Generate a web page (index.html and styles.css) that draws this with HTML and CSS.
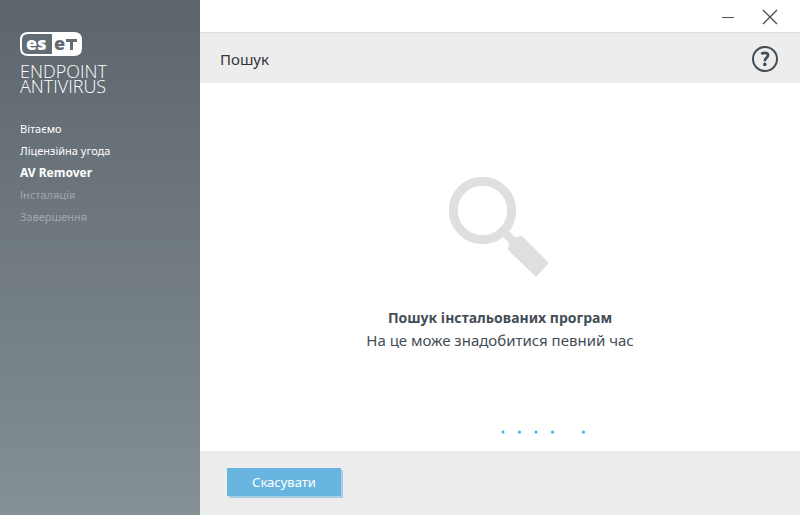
FILE: index.html
```html
<!DOCTYPE html>
<html lang="uk">
<head>
<meta charset="utf-8">
<meta name="viewport" content="width=device-width, initial-scale=1">
<title>ESET Endpoint Antivirus</title>
<link rel="stylesheet" href="styles.css">
</head>
<body>
<div class="window">
  <aside class="sidebar">
    <div class="brand">
      <svg class="brand-badge" viewBox="0 0 62 24" role="img" aria-label="eset">
        <path d="M8 0H54Q62 0 62 8V16Q62 24 54 24H8Q0 24 0 16V8Q0 0 8 0Z" fill="#fff"/>
        <path d="M8 2H32V22H8Q2 22 2 16V8Q2 2 8 2Z" fill="#626c73"/>
        <text class="badge-text" x="6" y="18" fill="#fff">es</text>
        <text class="badge-text" x="34" y="18" fill="#626c73">e</text>
        <path d="M46 7H57V10H53V18H50V10H46Z" fill="#626c73"/>
      </svg>
      <div class="brand-name">ENDPOINT<br>ANTIVIRUS</div>
    </div>
    <ol class="steps">
      <li>Вітаємо</li>
      <li>Ліцензійна угода</li>
      <li class="current" aria-current="step">AV Remover</li>
      <li class="pending">Інсталяція</li>
      <li class="pending">Завершення</li>
    </ol>
  </aside>
  <main class="main">
    <div class="titlebar">
      <button class="icon-button" type="button" aria-label="Згорнути">
        <svg width="16" height="16" viewBox="0 0 16 16"><path d="M2 8.5H14" stroke="#434d56" fill="none"/></svg>
      </button>
      <button class="icon-button" type="button" aria-label="Закрити">
        <svg width="16" height="16" viewBox="0 0 16 16"><path d="M1 1L15 15M15 1L1 15" stroke="#434d56" stroke-width="1.3" fill="none"/></svg>
      </button>
    </div>
    <header class="header">
      <h1>Пошук</h1>
      <button class="help" type="button" aria-label="Довідка">
        <svg width="26" height="26" viewBox="0 0 26 26" fill="none" stroke="#434d56">
          <circle cx="13" cy="13" r="12" stroke-width="2"/>
          <path d="M9.2 8Q10.8 6.8 12.8 6.8Q16 6.8 16 9.2Q16 10.6 14.4 11.8Q12.8 12.9 12.8 15.2" stroke-width="2.7"/>
          <circle cx="12.8" cy="18.4" r="1.8" fill="#434d56" stroke="none"/>
        </svg>
      </button>
    </header>
    <section class="content">
      <svg class="magnifier" width="102" height="100" viewBox="0 0 102 100" aria-hidden="true">
        <circle cx="33.5" cy="33.5" r="29.2" fill="none" stroke="#dfdfdf" stroke-width="9"/>
        <path d="M54 60L60 54L66 60L73 59L100 86L87 100L59 73L60 66Z" fill="#dfdfdf"/>
      </svg>
      <h2>Пошук інстальованих програм</h2>
      <p>На це може знадобитися певний час</p>
      <svg class="progress" width="86" height="4" viewBox="0 0 86 4" fill="#45a9dd" role="progressbar" aria-label="Пошук">
        <circle cx="2" cy="2" r="1.5"/><circle cx="18.5" cy="2" r="1.5"/><circle cx="35" cy="2" r="1.5"/><circle cx="51.5" cy="2" r="1.5"/><circle cx="82.5" cy="2" r="1.5"/>
      </svg>
    </section>
    <footer class="footer">
      <button class="cancel" type="button">Скасувати</button>
    </footer>
  </main>
</div>
</body>
</html>
```
FILE: styles.css
```css
* {
  box-sizing: border-box;
}

body {
  margin: 0;
  font-family: "Noto Sans", "Open Sans", sans-serif;
  color: #434d56;
  background: #fff;
}

button {
  font: inherit;
  border: 0;
  padding: 0;
  background: none;
  cursor: pointer;
}

svg {
  display: block;
}

.window {
  display: flex;
  min-height: 100vh;
}

.sidebar {
  flex: 0 0 25%;
  padding: 32px 20px;
  color: #fff;
  background: linear-gradient(#5c656c, #849095);
}

.brand-badge {
  width: 62px;
  height: 24px;
  overflow: visible;
}

.badge-text {
  font: 800 18px "Open Sans", sans-serif;
}

.brand-name {
  margin-top: 8px;
  font: 300 18px/15px "Open Sans", sans-serif;
}

.steps {
  list-style: none;
  margin: 24px 0 0;
  padding: 0;
  font-size: 11px;
  line-height: 22px;
}

.current {
  font-size: 12px;
  font-weight: 700;
}

.pending {
  color: #a3a8ab;
}

.main {
  flex: 1;
  display: flex;
  flex-direction: column;
}

.titlebar {
  display: flex;
  justify-content: flex-end;
  align-items: center;
  gap: 26px;
  height: 33px;
  padding: 2px 22px 0 0;
  border-bottom: 1px solid #dedede;
}

.header {
  display: flex;
  justify-content: space-between;
  align-items: center;
  height: 50px;
  padding: 1px 22px 0 20px;
  background: #ededed;
}

.header h1 {
  margin: 0;
  font-size: 15px;
  font-weight: 400;
  color: #333;
}

.content {
  flex: 1;
  display: flex;
  flex-direction: column;
  align-items: center;
  padding: 94px 20px 17px;
}

.content h2,
.content p {
  margin: 0;
  line-height: 22px;
}

.content h2 {
  margin-top: 30px;
  font-size: 14px;
}

.content p {
  font-size: 15px;
}

.progress {
  margin-top: auto;
  margin-left: 88px;
}

.footer {
  padding: 17px 27px;
  background: #ededed;
}

.cancel {
  min-width: 114px;
  height: 28px;
  margin-bottom: 2px;
  font-size: 13px;
  color: #fff;
  background: #68b6df;
  box-shadow: 2px 2px 0 #a5cee4;
}
```
